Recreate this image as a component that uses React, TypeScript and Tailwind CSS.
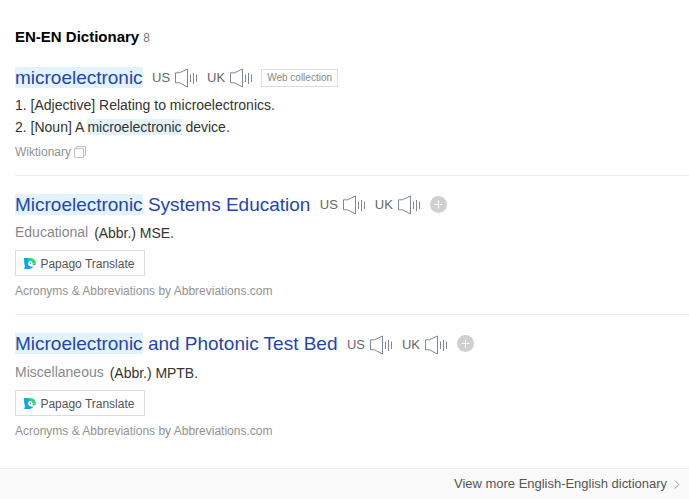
import type { ReactNode } from "react";

function Speaker() {
  return (
    <svg className="block h-5 w-[24px] shrink-0" viewBox="0 0 24 20" fill="none" stroke="#7c879c">
      <path d="M1.5 4.8H5.5L13.5 1V19L5.5 14.8H1.5Z" strokeWidth="1" />
      <path d="M16.5 6.5V14M19.5 5V16M22.5 6.5V14" strokeWidth="1" />
    </svg>
  );
}

function Pronounce({ label }: { label: string }) {
  return (
    <span className="flex h-5 items-center text-[13px] leading-5 text-[#666]">
      <span className="w-[22px]">{label}</span>
      <Speaker />
    </span>
  );
}

function Mark({ children }: { children: ReactNode }) {
  return <mark className="bg-[#e2f3fd] text-inherit">{children}</mark>;
}

type HeadProps = { word: string; rest?: string; soundClass?: string; children?: ReactNode };

function Head({ word, rest, soundClass = "", children }: HeadProps) {
  return (
    <div className="flex h-6 items-center whitespace-nowrap">
      <h3 className="text-[19px] leading-6 tracking-[-0.01px] text-[#2445b0]">
        <Mark>{word}</Mark>
        {rest}
      </h3>
      <div className={`ml-[9.5px] flex items-center gap-[9px] ${soundClass}`}>
        <Pronounce label="US" />
        <Pronounce label="UK" />
      </div>
      {children}
    </div>
  );
}

function PlusBadge() {
  return (
    <svg className="mb-px ml-[9px] block size-[17px]" viewBox="0 0 17 17">
      <circle cx="8.5" cy="8.5" r="8.5" fill="#d0d0d0" />
      <path d="M4.5 8.5H12.5M8.5 4.5V12.5" stroke="#fff" />
    </svg>
  );
}

function PapagoLogo() {
  return (
    <svg className="block h-[11px] w-[12px]" viewBox="0 0 12 11">
      <path d="M0 0H6V3L4 6L5.5 8L9.5 8.6Q8.5 11 5.5 11H0L1 8.6Q0 6 0 0Z" fill="#12a5e8" />
      <path d="M3.6 0H6.2Q11.5.3 12 5.6H8.4Q7.8 2.8 5 2.9Z" fill="#2fd673" />
      <path d="M4 5.6Q4.2 2.9 6.3 2.9Q8.4 3.2 8.6 5.6Q8.6 7 10 8.2Q4.8 9.4 4 5.6Z" fill="#fff" />
      <path d="M8.5 5.5H12Q12 7.6 9.6 7.6Q8.6 7 8.5 5.5Z" fill="#1cc5a0" />
      <circle cx="6.5" cy="5.1" r=".7" fill="#1676b8" />
    </svg>
  );
}

type AbbreviationProps = {
  rest: string;
  category: string;
  abbr: string;
  className: string;
  soundClass?: string;
  textClass: string;
};

function Abbreviation({ rest, category, abbr, className, soundClass, textClass }: AbbreviationProps) {
  return (
    <article className={`border-t border-[#ededed] ${className}`}>
      <Head word="Microelectronic" rest={rest} soundClass={soundClass}>
        <PlusBadge />
      </Head>
      <p className={`flex h-[22px] text-[14px] leading-[22px] ${textClass}`}>
        <span className="text-[#888]">{category}</span>
        <span className="ml-[6px] pt-px tracking-[-0.03px] text-[#333]">(Abbr.) {abbr}.</span>
      </p>
      <button className="mt-[7px] flex h-[26px] w-[130px] items-center border border-[#ddd] pl-2 text-[12px] text-[#555]">
        <PapagoLogo />
        <span className="ml-[4.4px] pt-px">Papago Translate</span>
      </button>
      <p className="mt-[6px] text-[12px] leading-[18px] text-[#929292]">Acronyms &amp; Abbreviations by Abbreviations.com</p>
    </article>
  );
}

export default function App() {
  return (
    <main className="flex h-[499px] w-[689px] flex-col overflow-hidden bg-white font-['Liberation_Sans',Arial,sans-serif]">
      <section className="h-[468px] pl-[15px] pt-[27px]">
        <h2 className="flex h-5 items-center text-[15px] font-bold leading-5 text-black">
          EN-EN Dictionary
          <span className="ml-1 pt-[2px] text-[12px] font-normal text-[#777]">8</span>
        </h2>
        <article className="mt-[19px] h-[109px]">
          <Head word="microelectronic">
            <span className="ml-2 flex h-[18px] w-[77px] items-center justify-center border border-[#ddd] pb-px text-[10px] text-[#888]">
              Web collection
            </span>
          </Head>
          <ol className="mt-1 text-[14px] leading-[22px] text-[#333]">
            <li>1. [Adjective] Relating to microelectronics.</li>
            <li>2. [Noun] A <Mark>microelectronic</Mark> device.</li>
          </ol>
          <p className="mt-[5px] flex h-[18px] items-center text-[12px] text-[#929292]">
            Wiktionary
            <svg className="ml-[3px] block size-3" viewBox="0 0 12 12" fill="none" stroke="#c2c2c2">
              <path d="M.5 2.5H9.5V11.5H.5ZM2.5 2.5V.5H11.5V9.5H9.5" />
            </svg>
          </p>
        </article>
        <Abbreviation
          rest=" Systems Education"
          category="Educational"
          abbr="MSE"
          className="h-[139px] pt-[17px]"
          textClass="mt-1"
        />
        <Abbreviation
          rest=" and Photonic Test Bed"
          category="Miscellaneous"
          abbr="MPTB"
          className="h-[140px] pt-[17px]"
          soundClass="pt-[2px]"
          textClass="mt-[5px]"
        />
      </section>
      <footer className="flex h-[31px] items-center justify-end border-t border-[#ededed] bg-[#fafafa] pr-[9px] text-[13px] text-[#555]">
        <span className="tracking-[-0.02px]">View more English-English dictionary</span>
        <svg className="ml-[7px] block h-[9px] w-[6px]" viewBox="0 0 6 9" fill="none" stroke="#999">
          <path d="M.8.5L4.8 4.5L.8 8.5" />
        </svg>
      </footer>
    </main>
  );
}
